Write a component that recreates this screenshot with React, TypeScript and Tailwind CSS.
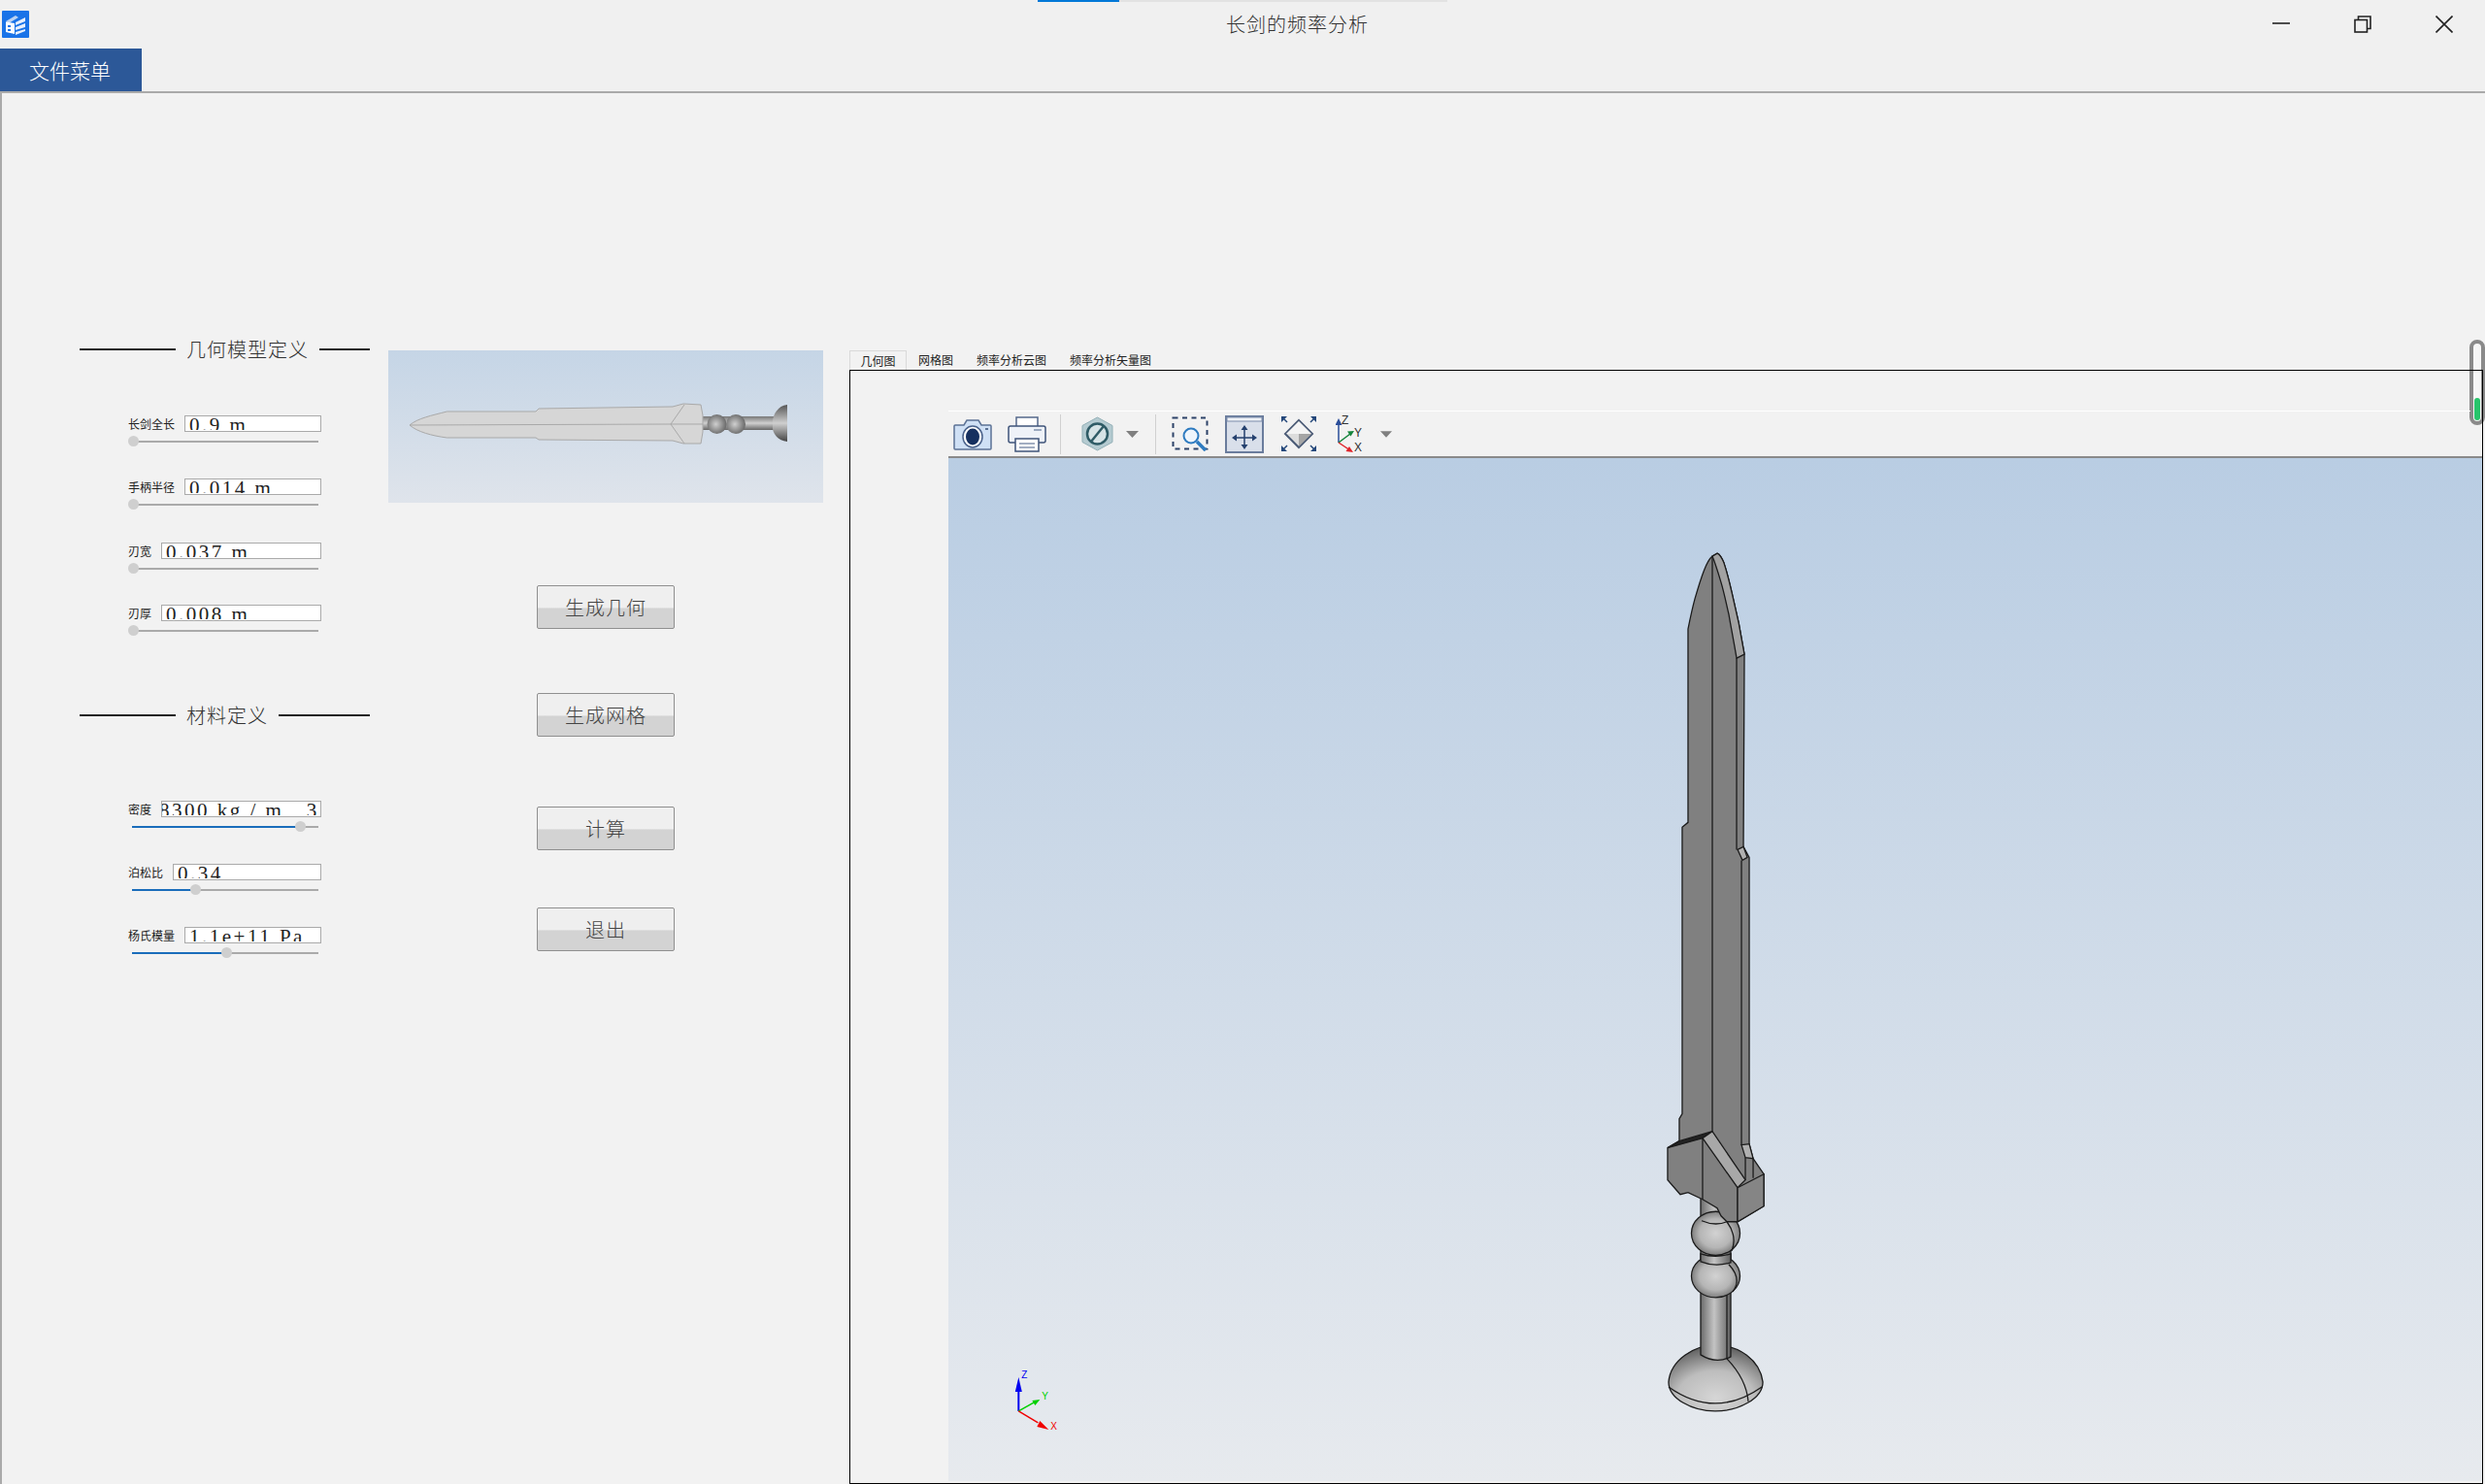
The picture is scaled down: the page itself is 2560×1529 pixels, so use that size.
const FONT = "font-['Noto_Sans_CJK_SC',sans-serif]";

function Logo() {
  return (
    <svg className="h-[28px] w-[28px]" viewBox="0 0 28 28" aria-hidden>
      <rect width="28" height="28" rx="1" fill="#1a73e8" />
      <path d="M4 11 14 5l3 2-10 6z" fill="#bcd3f2" />
      <path d="M4 11.5 13 13v11l-9-2z" fill="#fff" />
      <path d="M14 12 24 7v4L14 15zM14 17l10-4v4l-10 3zM14 22l10-3v2l-10 4z" fill="#e8f0fc" />
      <path d="M6 15h3v2H6zM6 19h3v2H6z" fill="#1a73e8" />
    </svg>
  );
}

function WindowControls() {
  return (
    <div className="ml-auto flex items-center">
      <svg className="h-[18px] w-[18px]" viewBox="0 0 18 18" aria-hidden>
        <path d="M0 8h18" stroke="#222" strokeWidth="1.6" />
      </svg>
      <svg className="ml-[66px] h-[18px] w-[18px]" viewBox="0 0 18 18" fill="none" stroke="#222" strokeWidth="1.6" aria-hidden>
        <rect x="1" y="4.5" width="12.5" height="12.5" />
        <path d="M4.5 4V1H17v12.5h-3" />
      </svg>
      <svg className="ml-[66px] mr-[33px] h-[18px] w-[18px]" viewBox="0 0 18 18" stroke="#222" strokeWidth="1.6" aria-hidden>
        <path d="m0.5 0.5 17 17M17.500 0.5l-17 17" />
      </svg>
    </div>
  );
}

function SectionTitle({ children, className }: { children: string; className: string }) {
  return (
    <div className={`flex h-[24px] items-center ${className}`}>
      <div className="h-[2px] w-[99px] bg-[#222]" />
      <div className="mx-[11px] text-[20px] font-light leading-[24px] tracking-[1px] text-[#333]">{children}</div>
      <div className="h-[2px] flex-1 bg-[#222]" />
    </div>
  );
}

function Field({
  label,
  value,
  thumb,
  fill,
  className,
  valueClass = "",
}: {
  label: string;
  value: string;
  thumb: number;
  fill: number;
  className: string;
  valueClass?: string;
}) {
  return (
    <div className={`ml-[50px] w-[199px] ${className}`}>
      <div className="flex h-[17px] items-center">
        <div className="mr-[10px] text-[12px] leading-[17px] text-[#222]">{label}</div>
        <div className="h-[17px] min-w-0 flex-1 overflow-hidden border border-[#aaa] bg-white pl-[4px]">
          <div className={`h-[14px] overflow-hidden whitespace-pre font-['Liberation_Serif',serif] text-[21px] leading-[19px] tracking-[2.5px] text-[#222] ${valueClass}`}>
            {value}
          </div>
        </div>
      </div>
      <div className="relative mt-[4px] flex h-[11px] w-[196px] items-center pl-[4px]">
        <div className="h-[2px] flex-1 bg-[#aaa]">
          <div className="h-[2px] bg-[#1a6dbb]" style={{ width: fill }} />
        </div>
        <div className="absolute top-0 h-[11px] w-[11px] rounded-full bg-[#cfcfcf]" style={{ left: thumb }} />
      </div>
    </div>
  );
}

function ActionButton({ label, className }: { label: string; className: string }) {
  return (
    <button
      type="button"
      className={`h-[45px] w-[142px] rounded-[2px] border border-[#8f8f8f] bg-[linear-gradient(#efefef_50%,#d3d3d3_54%)] text-[20px] font-light tracking-[1px] text-[#444] ${className}`}
    >
      {label}
    </button>
  );
}

function SmallSword() {
  return (
    <svg className="h-full w-full" viewBox="0 0 448 157" aria-hidden>
      <defs>
        <linearGradient id="sHandle" x1="0" y1="0" x2="0" y2="1">
          <stop offset="0" stopColor="#777" />
          <stop offset="0.5" stopColor="#d0d0d0" />
          <stop offset="1" stopColor="#666" />
        </linearGradient>
        <radialGradient id="sBall" cx="0.45" cy="0.5" r="0.6">
          <stop offset="0" stopColor="#cfcfcf" />
          <stop offset="1" stopColor="#5f5f5f" />
        </radialGradient>
        <linearGradient id="sPommel" x1="0" y1="0" x2="0" y2="1">
          <stop offset="0" stopColor="#555" />
          <stop offset="0.5" stopColor="#cfcfcf" />
          <stop offset="1" stopColor="#444" />
        </linearGradient>
      </defs>
      <rect x="321" y="68" width="76" height="14" fill="url(#sHandle)" />
      <ellipse cx="338.500" cy="76" rx="10" ry="10" fill="url(#sBall)" />
      <ellipse cx="358" cy="76" rx="10" ry="10" fill="url(#sBall)" />
      <path d="M411 56C401 57 397 66 396 72v9c1 5 5 12 15 13z" fill="url(#sPommel)" />
      <path
        d="M22 77C30 70 45 67 60.500 63H152l3-3 138-2 11-3 18 1 2 11v17l-2 12h-18l-11-3-138-1-3-2H60.500C45 88 30 84 22 77z"
        fill="#d6d6d6"
        stroke="#a9a9a9"
      />
      <path d="M22 77 291 76l33 0M291 76l14-20M291 76l14 20" fill="none" stroke="#a9a9a9" />
    </svg>
  );
}

function CameraIcon() {
  return (
    <svg className="h-[34px] w-[40px]" viewBox="0 0 40 34" aria-hidden>
      <path
        d="M2 8h9l3-5h12l3 5h9a1 1 0 0 1 1 1v23a1 1 0 0 1-1 1H2a1 1 0 0 1-1-1V9a1 1 0 0 1 1-1z"
        fill="#cfe0f5"
        stroke="#5c7295"
        strokeWidth="1.500"
      />
      <ellipse cx="20" cy="20" rx="10" ry="11" fill="#fff" stroke="#4a628b" strokeWidth="1.500" />
      <ellipse cx="20" cy="20" rx="7" ry="8.500" fill="#16305f" />
      <rect x="33" y="11" width="3" height="2" fill="#5c7295" />
    </svg>
  );
}

function PrinterIcon() {
  return (
    <svg className="h-[38px] w-[40px]" viewBox="0 0 40 38" aria-hidden>
      <path d="M9 12V2h22v10" fill="#fff" stroke="#55698c" strokeWidth="1.500" />
      <rect x="1" y="11" width="38" height="17" rx="2" fill="#eef2f8" stroke="#3f5479" strokeWidth="1.500" />
      <rect x="27" y="14" width="8" height="2" fill="#9aa8bf" />
      <path d="M8 24v13h24V24z" fill="#fff" stroke="#3f5479" strokeWidth="1.500" />
      <path d="M12 29h16M12 33h16" stroke="#8494ae" strokeWidth="1.500" />
    </svg>
  );
}

function HexIcon() {
  return (
    <svg className="h-[36px] w-[33px]" viewBox="0 0 33 36" aria-hidden>
      <path d="M16.500 1 32 9.500v17L16.500 35 1 26.500v-17z" fill="#b5cbd1" stroke="#93b0b7" />
      <circle cx="16.500" cy="18" r="10.500" fill="#d6e3e6" stroke="#2f5b66" strokeWidth="2.500" />
      <path d="m10 26 13-16" stroke="#2f5b66" strokeWidth="2.500" />
    </svg>
  );
}

function Caret({ className }: { className: string }) {
  return (
    <svg className={`h-[7px] ${className}`} viewBox="0 0 13 7" aria-hidden>
      <path d="M0 0h13L6.500 7z" fill="#7f7f7f" />
    </svg>
  );
}

function ZoomBoxIcon() {
  return (
    <svg className="h-[36px] w-[39px]" viewBox="0 0 39 36" fill="none" aria-hidden>
      <rect x="1.500" y="1.500" width="35" height="32" stroke="#2c4268" strokeWidth="2" strokeDasharray="5 4.500" />
      <circle cx="20" cy="20" r="7.500" fill="#eef5fc" stroke="#2e7bc0" strokeWidth="2" />
      <path d="m26 26 9 9" stroke="#2e7bc0" strokeWidth="3.500" />
    </svg>
  );
}

function PanIcon() {
  return (
    <svg className="h-[39px] w-[40px]" viewBox="0 0 40 39" aria-hidden>
      <rect x="1" y="1" width="38" height="37" fill="#d9dfea" stroke="#6a7c9c" strokeWidth="2" />
      <rect x="2" y="2" width="36" height="4" fill="#eef1f6" stroke="#7c8dab" />
      <path d="M20 13v20M10 23h20" stroke="#24406e" strokeWidth="1.500" />
      <path d="m20 10 3.500 5h-7zM20 35l3.500-5h-7zM7 23l5-3.500v7zM33 23l-5-3.500v7z" fill="#24406e" />
    </svg>
  );
}

function FitIcon() {
  return (
    <svg className="h-[38px] w-[38px]" viewBox="0 0 38 38" aria-hidden>
      <path d="M19 5 33 19 19 33 5 19z" fill="#dcdcdc" stroke="#4a5a75" strokeWidth="2" />
      <path d="M19 6 32 19H6z" fill="#f4f4f4" />
      <path d="M19 32 32 19H19z" fill="#a5a5a5" />
      <path d="M1 1h6L1 7zM37 1h-6l6 6zM1 37h6l-6-6zM37 37h-6l6-6z" fill="#24477a" />
      <path d="m3 3 4 4M35 3l-4 4M3 35l4-4M35 35l-4-4" stroke="#24477a" strokeWidth="1.500" />
    </svg>
  );
}

function AxesIcon() {
  return (
    <svg className="h-[38px] w-[36px]" viewBox="0 0 36 38" aria-hidden>
      <path d="M3 28V8" stroke="#2a4e9a" strokeWidth="1.500" />
      <path d="M3 3 6.500 10h-7z" fill="#2a4e9a" />
      <path d="m3 28 12-9" stroke="#14843a" strokeWidth="1.500" />
      <path d="m19 16-7 .5 3.500 5z" fill="#14843a" />
      <path d="m3 28 12 8" stroke="#e0242a" strokeWidth="1.500" />
      <path d="m18 38-7.500-1 3.500-5z" fill="#e0242a" />
      <text x="6" y="9" fontSize="12" fontFamily="Liberation Sans" fill="#333">Z</text>
      <text x="19" y="22" fontSize="12" fontFamily="Liberation Sans" fill="#333">Y</text>
      <text x="19" y="37" fontSize="12" fontFamily="Liberation Sans" fill="#333">X</text>
    </svg>
  );
}

// drawn in full-page pixels, viewBox is the viewport rectangle
function BigSword() {
  return (
    <svg className="absolute inset-0 h-full w-full" viewBox="977 472 1578 1053" aria-hidden>
      <defs>
        <linearGradient id="hGrad" x1="0" y1="0" x2="1" y2="0">
          <stop offset="0" stopColor="#6b6b6b" />
          <stop offset="0.45" stopColor="#c4c4c4" />
          <stop offset="1" stopColor="#5f5f5f" />
        </linearGradient>
        <radialGradient id="ballGrad" cx="0.5" cy="0.5" r="0.55">
          <stop offset="0" stopColor="#d2d2d2" />
          <stop offset="0.6" stopColor="#b5b5b5" />
          <stop offset="1" stopColor="#6e6e6e" />
        </radialGradient>
        <radialGradient id="pommelGrad" cx="0.5" cy="0.8" r="0.75">
          <stop offset="0" stopColor="#d6d6d6" />
          <stop offset="0.55" stopColor="#bdbdbd" />
          <stop offset="1" stopColor="#666" />
        </radialGradient>
      </defs>
      <g stroke="#1b1b1b" strokeWidth="1.300" fill="none">
        {/* pommel */}
        <path d="M1718 1423C1720 1400 1745 1385 1766 1385C1790 1385 1812 1400 1815 1423C1815 1440 1790 1453 1766 1453C1742 1453 1718 1440 1718 1423z" fill="url(#pommelGrad)" />
        <path d="M1718 1428Q1766 1462 1814 1428M1778 1399Q1798 1420 1800 1443" />
        {/* grip */}
        <path d="M1751 1225H1782V1397Q1767 1405 1751 1395z" fill="url(#hGrad)" />
        <path d="M1778 1333V1399" />
        {/* balls */}
        <ellipse cx="1766.500" cy="1314" rx="25" ry="22" fill="url(#ballGrad)" />
        <ellipse cx="1766.500" cy="1270" rx="25" ry="22.500" fill="url(#ballGrad)" />
        <path d="M1751 1291Q1766 1296 1782 1291V1300Q1766 1305 1751 1299z" fill="url(#hGrad)" />
        <path d="M1752 1257Q1766 1263 1778 1258M1778 1258Q1789 1273 1783 1288M1780 1302Q1794 1317 1784 1330" />
        {/* blade and guard outline */}
        <path
          d="M1763 573C1757 578 1752 593 1745 617C1742 628 1740 638 1738 648V847L1732 852V1147L1729 1152V1175L1717 1182V1215L1730 1230L1738 1228L1753 1235L1768 1244L1772 1252L1778 1258H1789L1816 1242V1209L1805 1193L1801 1178V883L1795 872L1796 674C1793 655 1788 630 1783 610C1780 597 1777 586 1775 580C1773 575 1771 571 1768 570z"
          fill="#808080"
        />
        {/* tip bevel */}
        <path d="M1763 573L1768 570C1771 571 1773 575 1775 580C1777 586 1780 597 1783 610C1788 630 1793 655 1796 674L1788 678C1785 660 1782 645 1780 633C1777 620 1775 610 1772 600C1769 590 1766 580 1763 573z" fill="#a2a2a2" />
        <path d="M1763 573V1165M1788 678V875M1793 886V1179" />
        <path d="M1789 875L1795 872L1799 883L1794 886z" fill="#b0b0b0" />
        <path d="M1793 1179L1801 1178L1805 1193L1797 1192z" fill="#b0b0b0" />
        <path d="M1797 1192V1215M1805 1193V1213" />
        {/* guard */}
        <path d="M1717 1182L1729 1175L1763 1165L1753 1172z" fill="#222" />
        <path d="M1753 1172L1763 1165L1797 1215L1789 1223z" fill="#a8a8a8" />
        <path d="M1753 1172V1235" />
        <path d="M1789 1223V1258" />
        <path d="M1789 1223L1816 1209V1242L1789 1258z" fill="#858585" />
      </g>
      <g fontFamily="Liberation Sans" fontSize="10">
        <path d="M1049 1453v-28" stroke="#0000f0" strokeWidth="2" />
        <path d="m1049 1418 3.500 15h-7z" fill="#0000f0" />
        <text x="1052" y="1419" fill="#0000f0">Z</text>
        <path d="m1049 1453 16-9" stroke="#00d000" strokeWidth="1.500" />
        <path d="m1071 1441-8 1 3 5z" fill="#00d000" />
        <text x="1073" y="1441" fill="#00d000">Y</text>
        <path d="m1049 1453 20 12" stroke="#f00000" strokeWidth="1.500" />
        <path d="m1080 1472-12-3 3-6z" fill="#f00000" />
        <text x="1082" y="1472" fill="#f00000">X</text>
      </g>
    </svg>
  );
}

const geometry = [
  { label: "长剑全长", value: "0.9 m", className: "mt-[56px]" },
  { label: "手柄半径", value: "0.014 m", className: "mt-[33px]" },
  { label: "刃宽", value: "0.037 m", className: "mt-[34px]" },
  { label: "刃厚", value: "0.008 m", className: "mt-[32px]" },
];

const materials = [
  { label: "密度", value: "8300 kg / m   3", thumb: 172, fill: 170, className: "mt-[76px]", valueClass: "-ml-[7px]" },
  { label: "泊松比", value: "0.34", thumb: 64, fill: 62, className: "mt-[33px]" },
  { label: "杨氏模量", value: "1.1e+11 Pa", thumb: 96, fill: 94, className: "mt-[33px]" },
];

const tabs = ["网格图", "频率分析云图", "频率分析矢量图"];

export default function App() {
  return (
    <div className={`relative flex h-[1529px] w-[2560px] flex-col overflow-hidden bg-[#f2f2f2] ${FONT}`}>
      {/* progress strip at the very top */}
      <div className="absolute left-[1069px] top-0 flex h-[2px]">
        <div className="w-[84px] bg-[#0078d7]" />
        <div className="w-[338px] bg-[#e2e2e2]" />
      </div>

      <div className="flex h-[50px] items-center bg-[#f0f0f0] pl-[2px]">
        <Logo />
        <div className="ml-[1233px] text-[20px] font-light leading-[50px] tracking-[1px] text-[#333]">长剑的频率分析</div>
        <WindowControls />
      </div>

      <div className="flex h-[44px] bg-[#f0f0f0]">
        <div className="w-[146px] bg-[#2c5898] pl-[30px] text-[21px] font-light leading-[44px] text-white">文件菜单</div>
      </div>

      {/* floating widget at the right edge, the pane lines run over it */}
      <div className="absolute left-[2544px] top-[350px] h-[88px] w-[16px] rounded-[8px] border-4 border-[#8a8a8a] bg-[#f6f6f6]">
        <div className="absolute bottom-[1px] left-[1px] h-[23px] w-[6px] rounded-[3px] bg-[#27c46b]" />
      </div>

      <div className="relative flex min-h-0 flex-1 border-l-2 border-t-2 border-[#aaa] pl-[80px] pr-[2px]">
        <div className="w-[299px] pt-[252px]">
          <SectionTitle className="">几何模型定义</SectionTitle>
          {geometry.map((g) => (
            <Field key={g.label} label={g.label} value={g.value} thumb={0} fill={0} className={g.className} />
          ))}
          <SectionTitle className="mt-[70px]">材料定义</SectionTitle>
          {materials.map((m) => (
            <Field
              key={m.label}
              label={m.label}
              value={m.value}
              thumb={m.thumb}
              fill={m.fill}
              className={m.className}
              valueClass={m.valueClass}
            />
          ))}
        </div>

        <div className="ml-[19px] flex w-[448px] flex-col items-center pt-[265px]">
          <div className="h-[157px] w-[448px] bg-linear-to-b from-[#c5d5e6] to-[#dfe4eb]">
            <SmallSword />
          </div>
          <ActionButton label="生成几何" className="mt-[85px]" />
          <ActionButton label="生成网格" className="mt-[66px]" />
          <ActionButton label="计算" className="mt-[72px]" />
          <ActionButton label="退出" className="mt-[59px]" />
        </div>

        <div className="ml-[27px] flex min-w-0 flex-1 flex-col pt-[265px]">
          <div className="flex h-[20px] text-[12px] leading-[19px] text-[#222]">
            <div className="w-[59px] border border-b-0 border-[#d9d9d9] text-center">几何图</div>
            {tabs.map((t) => (
              <div key={t} className="px-[12px]">
                {t}
              </div>
            ))}
          </div>
          <div className="flex min-h-0 flex-1 flex-col border border-black pb-[2px] pl-[101px] pt-[41px]">
            <div className="mr-[12px] h-px bg-white" />
            <div className="flex h-[48px] items-center border-b-2 border-b-[#8a8a8a] pl-[5px]">
              <CameraIcon />
              <div className="ml-[16px]">
                <PrinterIcon />
              </div>
              <div className="ml-[14px] h-[41px] w-px bg-[#d0d0d0]" />
              <div className="ml-[21px]">
                <HexIcon />
              </div>
              <Caret className="ml-[13px] w-[13px]" />
              <div className="ml-[17px] h-[41px] w-px bg-[#d0d0d0]" />
              <div className="ml-[16px]">
                <ZoomBoxIcon />
              </div>
              <div className="ml-[16px]">
                <PanIcon />
              </div>
              <div className="ml-[17px]">
                <FitIcon />
              </div>
              <div className="ml-[19px]">
                <AxesIcon />
              </div>
              <Caret className="ml-[10px] w-[12px]" />
            </div>
            <div className="relative min-h-0 flex-1 bg-linear-to-b from-[#b9cde3] to-[#e7eaee]">
              <BigSword />
            </div>
          </div>
        </div>
      </div>
    </div>
  );
}
